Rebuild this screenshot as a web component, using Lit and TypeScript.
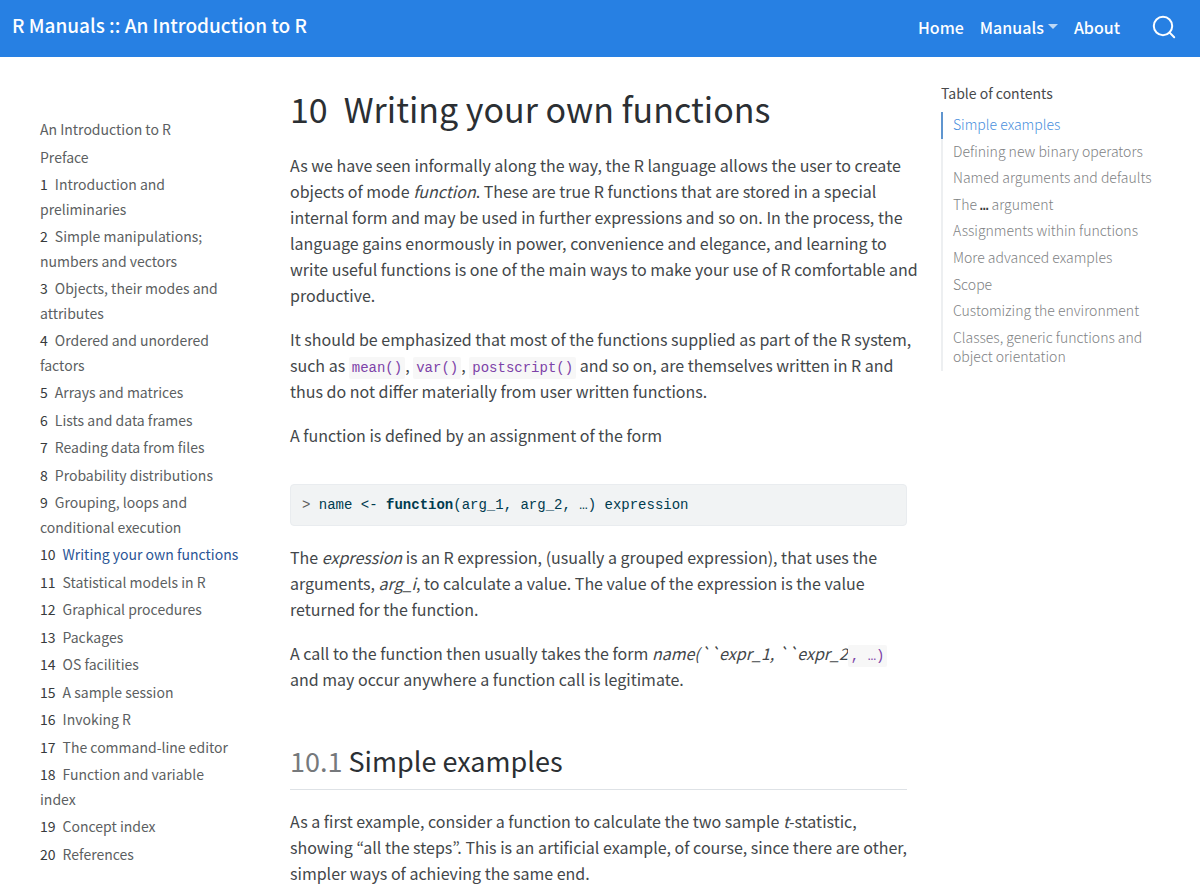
import { LitElement, html, css, nothing } from "lit";
import { customElement } from "lit/decorators.js";
import { classMap } from "lit/directives/class-map.js";

interface Chapter {
  num?: string;
  title: string;
}

const CHAPTERS: Chapter[] = [
  { title: "An Introduction to R" },
  { title: "Preface" },
  { num: "1", title: "Introduction and preliminaries" },
  { num: "2", title: "Simple manipulations; numbers and vectors" },
  { num: "3", title: "Objects, their modes and attributes" },
  { num: "4", title: "Ordered and unordered factors" },
  { num: "5", title: "Arrays and matrices" },
  { num: "6", title: "Lists and data frames" },
  { num: "7", title: "Reading data from files" },
  { num: "8", title: "Probability distributions" },
  { num: "9", title: "Grouping, loops and conditional execution" },
  { num: "10", title: "Writing your own functions" },
  { num: "11", title: "Statistical models in R" },
  { num: "12", title: "Graphical procedures" },
  { num: "13", title: "Packages" },
  { num: "14", title: "OS facilities" },
  { num: "15", title: "A sample session" },
  { num: "16", title: "Invoking R" },
  { num: "17", title: "The command-line editor" },
  { num: "18", title: "Function and variable index" },
  { num: "19", title: "Concept index" },
  { num: "20", title: "References" },
];

const CURRENT = "10";

const SECTIONS = [
  html`Simple examples`,
  html`Defining new binary operators`,
  html`Named arguments and defaults`,
  html`The <b>…</b> argument`,
  html`Assignments within functions`,
  html`More advanced examples`,
  html`Scope`,
  html`Customizing the environment`,
  html`Classes, generic functions and object orientation`,
];

@customElement("app-root")
export class AppRoot extends LitElement {
  static styles = css`
    :host {
      display: block;
      font-family: "Noto Sans CJK KR", "Noto Sans", sans-serif;
      font-size: 16px;
      line-height: 26px;
      color: #43474a;
      background: #fff;
    }
    a {
      color: inherit;
      text-decoration: none;
    }
    ul {
      list-style: none;
      margin: 0;
      padding: 0;
    }
    .navbar {
      display: flex;
      align-items: center;
      justify-content: space-between;
      height: 57px;
      box-sizing: border-box;
      padding: 0 24px 4px 12px;
      background: #2780e3;
      color: #fdfeff;
      font-weight: 500;
    }
    .brand {
      font-size: 19px;
      padding-bottom: 4px;
    }
    .menu {
      display: flex;
      align-items: center;
      gap: 16px;
    }
    .drop,
    .search {
      display: flex;
      align-items: center;
      border: 0;
      padding: 0;
      background: none;
      color: inherit;
      font: inherit;
    }
    .drop {
      gap: 4px;
    }
    .caret {
      border: 5px solid transparent;
      border-top-color: #bcd8f6;
      border-bottom: 0;
    }
    .search {
      margin-left: 16px;
    }
    .page {
      display: grid;
      grid-template-columns: 202px minmax(0, 1fr) 219px;
      padding: 0 40px;
      align-items: start;
    }
    .sidebar {
      padding-top: 60px;
      font-size: 14px;
      line-height: 1.75;
      color: #5c5f62;
    }
    .sidebar li {
      margin-bottom: 3px;
    }
    .num {
      color: #373a3c;
      margin-right: 7px;
    }
    .sidebar .current {
      color: #2a5596;
    }
    .content {
      margin: 0 34px 0 48px;
      padding-top: 29px;
    }
    h1,
    h2 {
      margin: 0;
      font-weight: 400;
      color: #2b2f33;
    }
    h1 {
      font-size: 34px;
      line-height: 46px;
      margin-bottom: 20px;
    }
    .h1num {
      margin-right: 16px;
    }
    h2 {
      margin: 36px 0 18px;
      padding: 13px 0 8px;
      font-size: 27px;
      line-height: 40px;
      border-bottom: 1px solid #dee2e6;
    }
    .h2num {
      color: #76797c;
    }
    p {
      margin: 0 -13px 18px 0;
    }
    code,
    pre {
      font-family: "Liberation Mono", monospace;
      font-size: 14px;
    }
    .inline {
      padding: 3px;
      line-height: 1;
      background: #f7f7f7;
      color: #7d42a8;
      border-radius: 2px;
    }
    pre {
      margin: 36px 0 18px;
      padding: 7px 11px;
      line-height: 26px;
      border: 1px solid #e9ecef;
      border-radius: 4px;
      background: #f1f3f4;
      color: #003b4f;
    }
    .prompt {
      color: #5e5e5e;
    }
    .toc {
      padding-top: 23px;
      font-size: 14px;
      line-height: 1.4;
    }
    .toc h3 {
      margin: 0 0 6px;
      font-size: 14px;
      line-height: 26px;
      font-weight: 400;
      color: #47494b;
    }
    .toc ul {
      font-weight: 300;
      color: #808284;
    }
    .toc a {
      display: block;
      padding: 3px 4px 4px 10px;
      border-left: 2px solid #edeff1;
    }
    .toc b {
      font-family: "Liberation Mono", monospace;
      font-weight: 700;
      line-height: 1;
      color: #373a3c;
    }
    .toc .active {
      color: #4a8fdd;
      border-left-color: #5f95cf;
    }
  `;

  render() {
    return html`
      <header class="navbar">
        <a class="brand" href="#">R Manuals :: An Introduction to R</a>
        <nav class="menu" aria-label="Main">
          <a href="#">Home</a>
          <button class="drop" type="button" aria-haspopup="true">Manuals<span class="caret"></span></button>
          <a href="#">About</a>
          <button class="search" type="button" aria-label="Search">
            <svg width="24" height="24" viewBox="0 0 24 24" fill="none" stroke="currentColor" stroke-width="2">
              <circle cx="11" cy="11" r="9.2" />
              <path d="M17.4 17.4L22.2 22.2" stroke-linecap="round" />
            </svg>
          </button>
        </nav>
      </header>
      <div class="page">
        <nav class="sidebar" aria-label="Chapters">
          <ul>
            ${CHAPTERS.map(
              (c) => html`<li>
                <a href="#" class=${classMap({ current: c.num === CURRENT })}
                  >${c.num ? html`<span class="num">${c.num}</span>` : nothing}${c.title}</a
                >
              </li>`
            )}
          </ul>
        </nav>
        <main class="content">
          <h1><span class="h1num">10</span>Writing your own functions</h1>
          <p>
            As we have seen informally along the way, the R language allows the user to create objects of mode
            <em>function</em>. These are true R functions that are stored in a special internal form and may be used in
            further expressions and so on. In the process, the language gains enormously in power, convenience and
            elegance, and learning to write useful functions is one of the main ways to make your use of R comfortable
            and productive.
          </p>
          <p>
            It should be emphasized that most of the functions supplied as part of the R system, such as
            <code class="inline">mean()</code>, <code class="inline">var()</code>,
            <code class="inline">postscript()</code> and so on, are themselves written in R and thus do not differ
            materially from user written functions.
          </p>
          <p>A function is defined by an assignment of the form</p>
          <pre><code><span class="prompt">&gt;</span> name &lt;- <b>function</b>(arg_1, arg_2, …) expression</code></pre>
          <p>
            The <em>expression</em> is an R expression, (usually a grouped expression), that uses the arguments,
            <em>arg_i</em>, to calculate a value. The value of the expression is the value returned for the function.
          </p>
          <p>
            A call to the function then usually takes the form
            <em>name(\`\`expr_1, \`\`expr_2</em><code class="inline">, …)</code><br />
            and may occur anywhere a function call is legitimate.
          </p>
          <h2><span class="h2num">10.1</span> Simple examples</h2>
          <p>
            As a first example, consider a function to calculate the two sample <em>t</em>-statistic, showing “all the
            steps”. This is an artificial example, of course, since there are other, simpler ways of achieving the same
            end.
          </p>
        </main>
        <nav class="toc" aria-labelledby="toc-title">
          <h3 id="toc-title">Table of contents</h3>
          <ul>
            ${SECTIONS.map(
              (s, i) => html`<li><a href="#" class=${classMap({ active: i === 0 })}>${s}</a></li>`
            )}
          </ul>
        </nav>
      </div>
    `;
  }
}
